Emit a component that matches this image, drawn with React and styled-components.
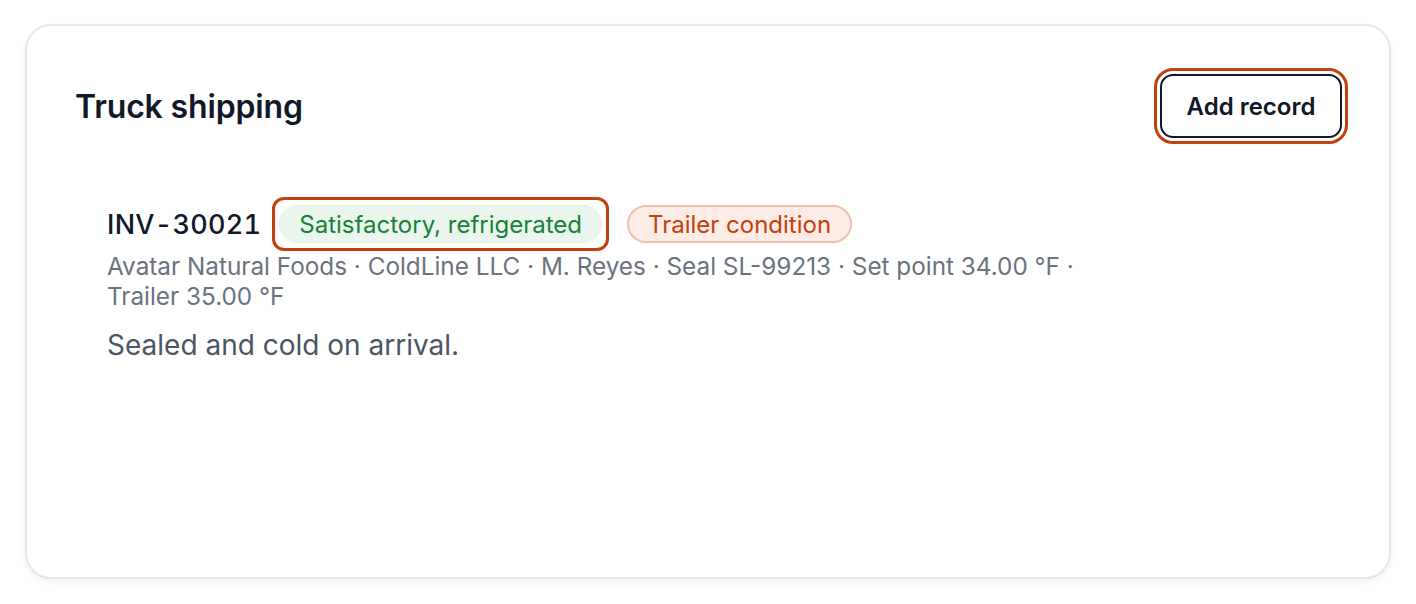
import React from 'react';
import styled, { createGlobalStyle, css } from 'styled-components';

const GlobalStyle = createGlobalStyle`
  html, body {
    margin: 0;
    padding: 0;
    background: #ffffff;
  }
  body {
    font-family: "Inter", "Liberation Sans", sans-serif;
    -webkit-font-smoothing: antialiased;
  }
`;

const Page = styled.div`
  padding: 24px 25px 25px 25px;
`;

const Card = styled.section`
  box-sizing: border-box;
  height: 555px;
  padding: 50px 47px 50px 48px;
  background: #ffffff;
  border: 2px solid #e6e7eb;
  border-radius: 26px;
  box-shadow: 0 3px 6px rgba(17, 24, 39, 0.06);
`;

const Header = styled.header`
  display: flex;
  align-items: center;
  justify-content: space-between;
  height: 64px;
  margin-top: -2px;
`;

const Title = styled.h2`
  margin: 0;
  font-size: 32px;
  font-weight: 600;
  color: #111827;
  letter-spacing: -0.005em;
`;

// the orange ring marks the focused element
const focusRing = css`
  outline: 3.5px solid #c2410c;
  outline-offset: 3.5px;
`;

const Button = styled.button`
  box-sizing: border-box;
  width: 182px;
  height: 64px;
  border: 2px solid #111827;
  border-radius: 13px;
  background: #ffffff;
  color: #111827;
  font-family: inherit;
  font-size: 24px;
  font-weight: 600;
  cursor: pointer;
  ${props => props.focused && focusRing};
`;

const List = styled.div`
  margin-top: 67px;
  padding-left: 32px;
`;

const Record = styled.article`
  display: flex;
  flex-direction: column;
`;

const TopLine = styled.div`
  display: flex;
  align-items: center;
  gap: 18px;
`;

const Invoice = styled.span`
  font-size: 27px;
  font-weight: 500;
  color: #111827;
  letter-spacing: 0.01em;
  font-variant-numeric: tabular-nums;
`;

const Badge = styled.span`
  box-sizing: border-box;
  display: inline-flex;
  align-items: center;
  height: 38px;
  padding: 0 19px;
  border-radius: 999px;
  font-size: 24px;
  font-weight: 400;
  white-space: nowrap;

  ${props =>
    props.tone === 'green' &&
    css`
      background: #eaf6ed;
      border: 1px solid #e0f0e4;
      color: #16803c;
    `};

  ${props =>
    props.tone === 'orange' &&
    css`
      background: #fdece6;
      border: 2px solid #f1bfac;
      color: #c2410c;
    `};
`;

const RingWrap = styled.span`
  display: inline-flex;
  padding: 5px 4px;
  margin: -8px 0 -8px -7px;
  border: 3px solid #c2410c;
  border-radius: 12px;
`;

const Meta = styled.p`
  max-width: 1000px;
  margin: 8px 0 0 0;
  font-size: 24.3px;
  line-height: 30px;
  color: #6b7280;
`;

const Note = styled.p`
  margin: 17px 0 0 0;
  font-size: 28px;
  line-height: 34px;
  color: #4b5563;
`;

const record = {
  invoice: 'INV-30021',
  status: 'Satisfactory, refrigerated',
  flag: 'Trailer condition',
  meta: [
    'Avatar Natural Foods',
    'ColdLine LLC',
    'M. Reyes',
    'Seal SL-99213',
    'Set point 34.00 °F',
    'Trailer 35.00 °F',
  ],
  note: 'Sealed and cold on arrival.',
};

const App = () => {
  return (
    <Page>
      <GlobalStyle />
      <Card>
        <Header>
          <Title>Truck shipping</Title>
          <Button focused>Add record</Button>
        </Header>

        <List>
          <Record>
            <TopLine>
              <Invoice>{record.invoice}</Invoice>
              <RingWrap>
                <Badge tone="green">{record.status}</Badge>
              </RingWrap>
              <Badge tone="orange">{record.flag}</Badge>
            </TopLine>
            <Meta>{record.meta.join(' · ')}</Meta>
            <Note>{record.note}</Note>
          </Record>
        </List>
      </Card>
    </Page>
  );
};

export default App;
